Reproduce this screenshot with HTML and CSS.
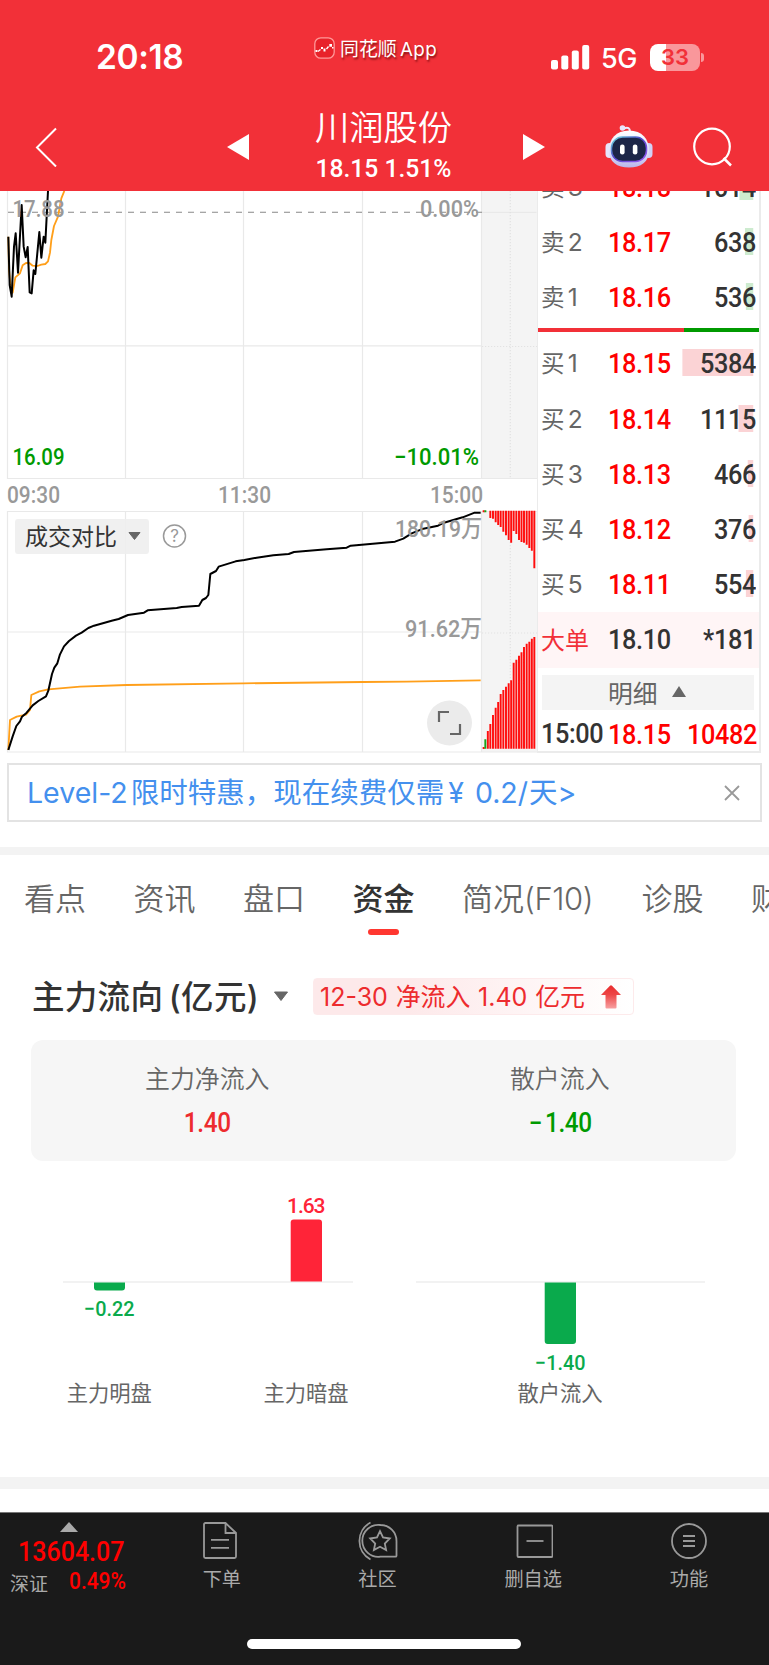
FILE: index.html
```html
<!DOCTYPE html>
<html lang="zh-CN">
<head>
<meta charset="utf-8">
<title>川润股份</title>
<link rel="stylesheet" href="styles.css">
</head>
<body>
<div class="app">
  <header class="header">
    <div class="status">
      <div class="clock">20:18</div>
      <div class="app-mark">
        <svg width="21" height="22" viewBox="0 0 21 22"><rect x=".8" y=".8" width="19.4" height="20.4" rx="6" fill="#e8222a" stroke="#f99" stroke-width="1.3"/><path d="M1.500 13h2v2h-2zM9.500 11.500h2v3h-2zM7 10h2v2H7zM15.300 7h2.700v2.700h-2.700zM18 10h1.500v1.500H18z" fill="#fff"/><path d="M4 14.500l2.500-2M12.500 12l2-2.500" stroke="#fff" stroke-width="1.300"/></svg>
        <span>同花顺 <i>App</i></span>
      </div>
      <div class="signals">
        <svg width="39" height="25" viewBox="0 0 39 25" fill="#fff"><rect x="0" y="15" width="7" height="9.500" rx="2"/><rect x="10.300" y="10.500" width="7" height="14" rx="2"/><rect x="20.800" y="5.500" width="7" height="19" rx="2"/><rect x="31.200" y="0" width="7" height="24.500" rx="2"/></svg>
        <span class="net">5G</span>
        <div class="battery"><b>33</b></div>
        <div class="nub"></div>
      </div>
    </div>
    <nav class="nav">
      <svg class="back" width="24" height="40" viewBox="0 0 24 40"><path d="M21 1.500L2 20.500 21 39.500" fill="none" stroke="#fff" stroke-width="2"/></svg>
      <svg class="prev" width="22" height="26" viewBox="0 0 22 26"><path d="M0 13L22 0v26z" fill="#fff"/></svg>
      <div class="title"><div class="name">川润股份</div><div class="quote">18.15 1.51%</div></div>
      <svg class="next" width="22" height="26" viewBox="0 0 22 26"><path d="M22 13L0 0v26z" fill="#fff"/></svg>
      <svg class="robot" width="48" height="46" viewBox="0 0 48 46">
        <defs>
          <linearGradient id="shell" x1="0" y1="0" x2="0" y2="1"><stop offset="0" stop-color="#fff"/><stop offset=".6" stop-color="#dde0fa"/><stop offset="1" stop-color="#b9b5ea"/></linearGradient>
          <linearGradient id="rim" x1="0" y1="0" x2="1" y2="1"><stop offset="0" stop-color="#6de3dc"/><stop offset=".45" stop-color="#5146c9"/><stop offset="1" stop-color="#9b59f5"/></linearGradient>
        </defs>
        <path d="M19 4.500C23 3 25 4 25 8" fill="none" stroke="#eeeafc" stroke-width="2"/><circle cx="17.500" cy="4" r="2.800" fill="#e9e6fb"/>
        <rect x=".5" y="19" width="8" height="15" rx="4" fill="#e6e5fb"/><rect x="39.500" y="19" width="8" height="15" rx="4" fill="#d2d1f6"/>
        <path d="M24 6.500C37 6.500 44 15 44 26.500C44 38 36 43.500 24 43.500S4 38 4 26.500C4 15 11 6.500 24 6.500z" fill="url(#shell)"/>
        <rect x="6.500" y="13" width="35" height="24.500" rx="11" fill="#1c2547" stroke="url(#rim)" stroke-width="1.500"/>
        <rect x="15" y="20.500" width="4.600" height="10" rx="2.200" fill="#fff"/><rect x="27.800" y="20.500" width="4.600" height="10" rx="2.200" fill="#fff"/>
      </svg>
      <svg class="search" width="40" height="40" viewBox="0 0 40 40" fill="none" stroke="#fff" stroke-width="2.200"><circle cx="19" cy="19.500" r="17.800"/><path d="M30.500 31l7.500 7.500" stroke-width="2.500"/></svg>
    </nav>
  </header>

  <main class="market">
    <svg class="charts" width="537" height="562" viewBox="0 191 537 562">
      <rect x="482" y="191" width="55" height="287" fill="#f4f4f4"/><rect x="482" y="511" width="55" height="241" fill="#f4f4f4"/>
      <g fill="none" stroke="#e9e9e9" stroke-width="1.200">
        <path d="M7.500 191v287.500h530M7.500 345.800h474M125.500 191v287.500M243.500 191v287.500M362.500 191v287.500M481.500 191v287.500M481.500 212.300h55"/>
        <path d="M7.500 752.500v-241h530M7.500 752h530M7.500 632h474M125.500 511v241M243.500 511v241M362.500 511v241M481.500 511v241M7.500 752h530"/>
        <path d="M510.300 191v287M510.300 542v140M482 346.500h55M482 633h55" stroke="#e2e2e2" stroke-dasharray="1.200 1.800"/>
      </g>
      <path d="M8 212.300h474" stroke="#888" stroke-width="1.100" stroke-dasharray="6 6" fill="none"/>
      <g transform="translate(0 180) scale(.333333)" fill="none" stroke-linejoin="round">
        <path d="M25 170L27 270 33 330 38 338 46 292 60 280 68 256 78 249 88 249 98 257 112 258 124 254 136 252 144 244 150 218 154 180 162 138 174 110 184 55 193 33" stroke="#ff9f1a" stroke-width="5.500"/>
        <path d="M25 170L29 315 35 350 42 200 47 160 54 278 65 75 71 200 77 232 83 201 89 337 95 340 101 271 106 282 118 156 124 233 131 170 136 188 144 33" stroke="#000" stroke-width="6"/>
      </g>
      <g transform="translate(0 490) scale(.333333)" fill="none" stroke-linejoin="round">
        <path d="M25 780L30 690 50 680 78 674 90 660 94 615 118 604 145 598 240 590 380 585 730 580 1090 576 1220 575 1442 571" stroke="#ff9f1a" stroke-width="5.500"/>
        <path d="M25 780L38 739 49 708 60 694 66 680 80 668 98 646 115 633 138 619 145 602 156 552 163 533 172 520 180 493 192 469 207 453 228 437 245 428 265 414 282 407 335 392 356 387 384 375 432 368 443 361 530 354 545 351 597 347 607 330 618 324 625 315 631 252 648 243 656 230 707 214 733 210 770 203 820 196 866 192 882 186 980 178 1040 173 1052 167 1185 155 1210 146 1235 130 1270 116 1314 107 1332 98 1388 82 1424 68 1442 68" stroke="#000" stroke-width="6"/>
      </g>
      <g transform="translate(380 490) scale(.333333)" stroke="#ff0d0d" stroke-width="5.800">
        <path d="M331 62V84M339 62V86M347 62V97M354.500 62V105M362 62V111M370 62V125M378 62V136M386 62V150M393.500 62V158M401 62V123M409 62V132M417 62V150M424.500 62V156M432 62V158M440 62V164M448 62V174M455.500 62V182M463 62V235M308 64h6"/>
        <path d="M308 774h6M323.500 776V723M331 776V702M339 776V675M347 776V653M354.500 776V636M362 776V612M370 776V600M378 776V590M386 776V580M393.500 776V571M401 776V518M409 776V509M417 776V497M424.500 776V487M432 776V471M440 776V461M448 776V455M455.500 776V446M463 776V441"/>
        <path d="M316 776V748M313 64h6" stroke="#1aa31a"/>
      </g>
      <g class="label">
        <text x="12.500" y="216.500" textLength="52" lengthAdjust="spacingAndGlyphs">17.88</text><text x="420" y="216.500" textLength="59" lengthAdjust="spacingAndGlyphs">0.00%</text>
        <text x="12.500" y="465" textLength="52" lengthAdjust="spacingAndGlyphs" class="green">16.09</text><text x="394" y="465" textLength="85" lengthAdjust="spacingAndGlyphs" class="green">−10.01%</text>
        <text x="7" y="502.500" textLength="53" lengthAdjust="spacingAndGlyphs">09:30</text><text x="218" y="502.500" textLength="53" lengthAdjust="spacingAndGlyphs">11:30</text><text x="430" y="502.500" textLength="53" lengthAdjust="spacingAndGlyphs">15:00</text>
        <text x="395" y="536.500" textLength="87" lengthAdjust="spacingAndGlyphs">180.19万</text><text x="405" y="636.500" textLength="77" lengthAdjust="spacingAndGlyphs">91.62万</text>
      </g>
      <rect x="15" y="519" width="134" height="35" rx="3" fill="#eee" fill-opacity=".9"/>
      <text x="25" y="545" textLength="92" class="picker">成交对比</text><path d="M129 532.500h11l-5.500 7z" fill="#666" stroke="#666"/>
      <circle cx="174.500" cy="536" r="11" fill="none" stroke="#999" stroke-width="1.500"/><text x="174.700" y="542" class="help">?</text>
      <circle cx="449.500" cy="723" r="22.500" fill="#ebebeb"/><path d="M439 722v-10h10M460 724v10h-10" fill="none" stroke="#666" stroke-width="2.200"/>
    </svg>

    <section class="book">
      <div class="row half"><span>卖 <i>3</i></span><b>18.18</b><em><u class="ask" style="width:15px"></u>1014</em></div>
      <div class="row"><span>卖 <i>2</i></span><b>18.17</b><em><u class="ask" style="width:9px"></u>638</em></div>
      <div class="row"><span>卖 <i>1</i></span><b>18.16</b><em><u class="ask" style="width:8px"></u>536</em></div>
      <div class="ratio"></div>
      <div class="row"><span>买 <i>1</i></span><b>18.15</b><em><u style="width:77px"></u>5384</em></div>
      <div class="row"><span>买 <i>2</i></span><b>18.14</b><em><u style="width:16px"></u>1115</em></div>
      <div class="row"><span>买 <i>3</i></span><b>18.13</b><em><u style="width:6px"></u>466</em></div>
      <div class="row"><span>买 <i>4</i></span><b>18.12</b><em><u style="width:5px"></u>376</em></div>
      <div class="row"><span>买 <i>5</i></span><b>18.11</b><em><u style="width:8px"></u>554</em></div>
      <div class="row big"><span>大单</span><b>18.10</b><em>*181</em></div>
      <div class="detail">明细<svg width="14" height="11" viewBox="0 0 14 11"><path d="M7 0l7 11H0z" fill="#666"/></svg></div>
      <div class="row trade"><span>15:00</span><b>18.15</b><em>10482</em></div>
    </section>
  </main>

  <div class="banner"><span><i>Level-2</i>限时特惠，现在续费仅需<i class="yen">¥ 0.2/</i>天<i>&gt;</i></span>
    <svg width="16" height="16" viewBox="0 0 16 16"><path d="M1 1l14 14M15 1L1 15" stroke="#999" stroke-width="1.800"/></svg></div>
  <div class="gap"></div>

  <nav class="tabs">
    <a>看点</a><a>资讯</a><a>盘口</a><a class="on">资金</a><a class="wide">简况<i>(F10)</i></a><a>诊股</a><a>财务</a>
  </nav>

  <section class="flow">
    <div class="flow-head">
      <h2>主力流向 <i>(</i>亿元<i>)</i></h2>
      <svg width="16" height="11" viewBox="0 0 16 11"><path d="M1.500 1h13L8 9.500z" fill="#666" stroke="#666" stroke-linejoin="round"/></svg>
      <div class="badge"><span><i>12-30</i> 净流入 <i>1.40</i> 亿元</span>
        <svg width="20" height="24" viewBox="0 0 20 24"><defs><linearGradient id="up" x1="0" y1="0" x2="0" y2="1"><stop offset="0" stop-color="#e92c2d"/><stop offset=".4" stop-color="#ed4546"/><stop offset="1" stop-color="#f7a0a1"/></linearGradient></defs><path d="M9 .8q1-1 2 0L20 10H15.500V22.500q0 1-1 1H5.500q-1 0-1-1V10H0z" fill="url(#up)"/></svg></div>
    </div>
    <div class="card">
      <div><p>主力净流入</p><strong class="up">1.40</strong></div>
      <div><p>散户流入</p><strong class="down">− 1.40</strong></div>
    </div>
    <svg class="bars" width="769" height="316" viewBox="0 1161 769 316">
      <path d="M63 1282h290M416 1282h289" stroke="#f2f2f2" stroke-width="2"/>
      <g fill="#0aaa4c"><path d="M94 1282.500h31v5q0 3-3 3h-25q-3 0-3-3zM544.700 1282.500h31.300v58.500q0 3-3 3h-25.300q-3 0-3-3z"/></g>
      <path d="M290.700 1281.500v-59q0-3 3-3h25.300q3 0 3 3v59z" fill="#ff2438"/>
      <g class="value"><text x="84" y="1315.500" textLength="50.500" lengthAdjust="spacingAndGlyphs">−0.22</text><text x="287" y="1213.300" textLength="38.500" lengthAdjust="spacing" class="hot">1.63</text><text x="535" y="1369.800" textLength="50.500" lengthAdjust="spacingAndGlyphs">−1.40</text></g>
      <g class="axis"><text x="109.300" y="1401">主力明盘</text><text x="306" y="1401">主力暗盘</text><text x="560" y="1401">散户流入</text></g>
    </svg>
  </section>
  <div class="gap thick"></div>
  <div class="blank"></div>

  <footer class="dock">
    <div class="items">
      <div class="index"><svg width="18" height="10" viewBox="0 0 18 10"><path d="M9 0l9 10H0z" fill="#aaa"/></svg><b>13604.07</b><p><span>深证</span><em>0.49%</em></p></div>
      <a><svg width="40" height="40" viewBox="0 0 40 40"><path d="M23.500 2H3.500q-1.500 0-1.500 1.500v32q0 1.500 1.500 1.500h29q1.500 0 1.500-1.500V12zM23.500 2v10H34M9 18.800h18M9 26.800h18"/></svg>下单</a>
      <a><svg width="40" height="40" viewBox="0 0 40 40"><path d="M12.500 1.500A21 21 0 0 0 12.500 38.500M22.500 4A16 16 0 1 0 22.500 35.700H37.500q1 0 1-1V20A16 16 0 0 0 22.500 4zM22 10.200l3 6.300 6.800 1-5 5 1.300 6.500-6.100-3.300-6.100 3.300 1.300-6.500-5-5 6.800-1z"/></svg>社区</a>
      <a><svg width="40" height="40" viewBox="0 0 40 40"><rect x="4.500" y="4.500" width="35" height="31.500" rx="1"/><path d="M13.500 20h17"/></svg>删自选</a>
      <a><svg width="40" height="40" viewBox="0 0 40 40"><circle cx="20" cy="20" r="17"/><path d="M14 15h12M14 20h12M14 25h12"/></svg>功能</a>
    </div>
    <div class="home"></div>
  </footer>
</div>
</body>
</html>
```

FILE: styles.css
```css
* { box-sizing: border-box; }
body { margin: 0; background: #fff; font-family: "Noto Sans CJK SC", sans-serif; color: #333; }
i, em, u { font-style: normal; text-decoration: none; }
i { font-family: Inter, sans-serif; }
p, h2 { margin: 0; }
svg { display: block; flex: none; }
.app { width: 769px; height: 1665px; overflow: hidden; display: flex; flex-direction: column; }

.header { height: 191px; background: #f23038; color: #fff; flex: none; }
.status { height: 100px; display: flex; padding-left: 96px; }
.clock { width: 218px; padding-top: 36px; font: 600 33.500px/42px Inter, sans-serif; letter-spacing: -.4px; }
.app-mark { width: 237px; display: flex; gap: 5px; padding-top: 37px; font-size: 18.900px; line-height: 22px; text-shadow: 1px 2px 2px rgba(80,0,0,.65); white-space: nowrap; }
.app-mark i { font-size: 18.800px; margin-left: -1px; letter-spacing: .4px; }
.signals { display: flex; padding-top: 45px; }
.net { margin-left: 11px; width: 49px; margin-top: -1px; font: 500 27px/30px Inter, sans-serif; letter-spacing: -.5px; }
.battery { width: 50px; height: 27px; margin-top: -1px; border-radius: 8px; background: linear-gradient(90deg, #fff 33%, #f9979b 33%); color: #f23038; text-align: center; font: 600 22px/27px Inter, sans-serif; }
.battery b { font-weight: 600; }
.nub { width: 3px; height: 9px; margin: 8px 0 0 1px; border-radius: 0 4px 4px 0; background: #f9979b; }
.nav { display: flex; height: 91px; }
.back { margin: 27px 0 0 35px; }
.prev { margin: 34px 0 0 168px; }
.title { width: 274px; padding-right: 5px; text-align: center; }
.name { font-size: 34.300px; line-height: 40px; margin-top: 5px; font-weight: 350; }
.quote { font: 500 26.500px/28px Roboto, sans-serif; margin-top: 9px; transform: scaleX(.93); }
.next { margin-top: 34px; }
.robot { margin: 24px 0 0 60px; }
.search { margin: 27px 0 0 40px; }

.market { display: flex; height: 562px; flex: none; overflow: hidden; }
.charts { overflow: hidden; }
.label { font: 500 23.500px Roboto, "Noto Sans CJK SC", sans-serif; fill: #999; }
.label .green { fill: #009a00; }
.picker { font-size: 23px; fill: #333; }
.help { font: 400 17px Inter, sans-serif; fill: #999; text-anchor: middle; }
.book { width: 224px; border: solid #ebebeb; border-width: 0 2px 2px 1px; display: flex; flex-direction: column; }
.row { height: 55.200px; flex: none; display: flex; align-items: center; padding-left: 3px; white-space: nowrap; }
.half { margin-top: -31.200px; }
.row span { width: 67px; font-size: 23.500px; line-height: 32px; padding-bottom: 2px; color: #666; }
.row i { font-size: 24.500px; margin-left: -2px; }
.row b, .row em, .row.trade span { font: 500 27.500px/30px Roboto, sans-serif; letter-spacing: -.4px; transform: scaleX(.92); transform-origin: 0 50%; padding-top: 1px; }
.row b { width: 73px; color: #f00; }
.row em { position: relative; width: 75px; text-align: right; color: #333; transform-origin: 100% 50%; }
.row u { position: absolute; z-index: -1; right: 3px; top: 1px; height: 27px; background: #fbd3d5; }
.row .ask { background: #cdebcf; }
.ratio { height: 4px; margin: 2.500px 0 4.500px; flex: none; background: linear-gradient(90deg, #f23038 66%, #009a00 66%); }
.big { background: #fff5f6; }
.row.big span { color: #f23038; font-size: 24px; }
.row.big b { color: #333; }
.detail { margin: 7.500px 5px 0 4px; height: 35px; flex: none; background: #f4f4f4; display: flex; align-items: center; padding: 0 0 2px 66px; gap: 14px; font-size: 24.800px; color: #666; }
.trade { height: 49px; }
.row.trade span { color: #333; }
.row.trade em, .row.trade b { color: #f00; }

.banner { height: 59px; flex: none; margin: 10px 7px 0; border: 2px solid #e3e3e3; display: flex; align-items: center; justify-content: space-between; padding: 0 20px 0 18px; color: #4490ee; font-size: 28.500px; white-space: nowrap; }
.banner span { padding-bottom: 4px; }
.banner i { margin-right: 3px; }
.banner .yen { margin: 0 1px 0 4px; word-spacing: 3px; }
.gap { height: 8px; margin-top: 25px; flex: none; background: #f3f3f3; }

.tabs { height: 103px; flex: none; display: flex; padding: 19px 0 0 24px; gap: 47.500px; font-size: 31px; line-height: 46px; color: #666; white-space: nowrap; overflow: hidden; }
.tabs a { flex: none; width: 62px; font-weight: 350; }
.tabs .wide { width: 132px; }
.tabs i { font-size: 31px; letter-spacing: -.4px; }
.tabs .on { color: #333; font-weight: 500; }
.tabs .on::after { content: ""; display: block; width: 31px; height: 6px; margin: 9px auto 0; border-radius: 3px; background: #ff3730; }

.flow-head { height: 82px; display: flex; align-items: flex-start; padding: 20px 0 0 32px; }
.flow-head > svg { margin: 13px 24px 0 1px; }
h2 { width: 240px; margin-top: -2px; font-size: 32.500px; line-height: 38px; font-weight: 500; white-space: nowrap; letter-spacing: .3px; word-spacing: -2px; }
.badge { width: 321px; height: 37px; display: flex; align-items: center; justify-content: space-between; padding: 0 12px 0 6px; border-radius: 4px; border: 1px solid #fdeaeb; background: linear-gradient(90deg, #fde9ea 30%, #fff); color: #ed2b2e; font-size: 24.900px; white-space: nowrap; }
.badge span { padding-bottom: 3px; word-spacing: 2.200px; }
.badge i { font-size: 25px; }
.card { height: 121px; margin: 0 33px 0 31px; border-radius: 12px; background: #f6f6f6; display: flex; text-align: center; }
.card div { flex: 1; padding-top: 19px; }
.card p { font-size: 24.900px; line-height: 36px; color: #666; font-weight: 350; }
.card strong { display: block; font: 500 27px/30px Roboto, sans-serif; letter-spacing: -.4px; word-spacing: -3px; margin-top: 13px; transform: scaleX(.9); }
.up { color: #ed2b2e; }
.down { color: #009a00; }
.value { font: 500 21px Roboto, sans-serif; fill: #0aaa4c; }
.hot { fill: #ff2438; }
.axis { font-size: 21.300px; fill: #666; text-anchor: middle; }
.thick { height: 12px; margin-top: 0; }
.blank { height: 23px; flex: none; }

.dock { height: 153px; flex: none; background: #1a1a1a; border-top: 1px solid #777; color: #aaa; }
.items { display: flex; height: 126px; padding-top: 8px; }
.items a { width: 155.700px; display: flex; flex-direction: column; align-items: center; font-size: 19.200px; line-height: 28px; gap: 3px; }
.items a svg { fill: none; stroke: #999; stroke-width: 1.800; }
.index { width: 144px; }
.index svg { margin: 1px 0 0 60px; }
.index b { display: block; margin: 6px 0 0 18px; font: 500 27.500px/28px Roboto, sans-serif; color: #f00; transform: scaleX(.91); transform-origin: 0 50%; }
.index p { display: flex; align-items: center; height: 28px; margin-top: 2px; padding-left: 10px; font-size: 19px; }
.index p span { width: 59px; }
.index em { font: 500 23px/28px Roboto, sans-serif; color: #f00; transform: scaleX(.91); transform-origin: 0 50%; }
.home { width: 274px; height: 10px; margin-left: 247px; border-radius: 5px; background: #fff; }
```
